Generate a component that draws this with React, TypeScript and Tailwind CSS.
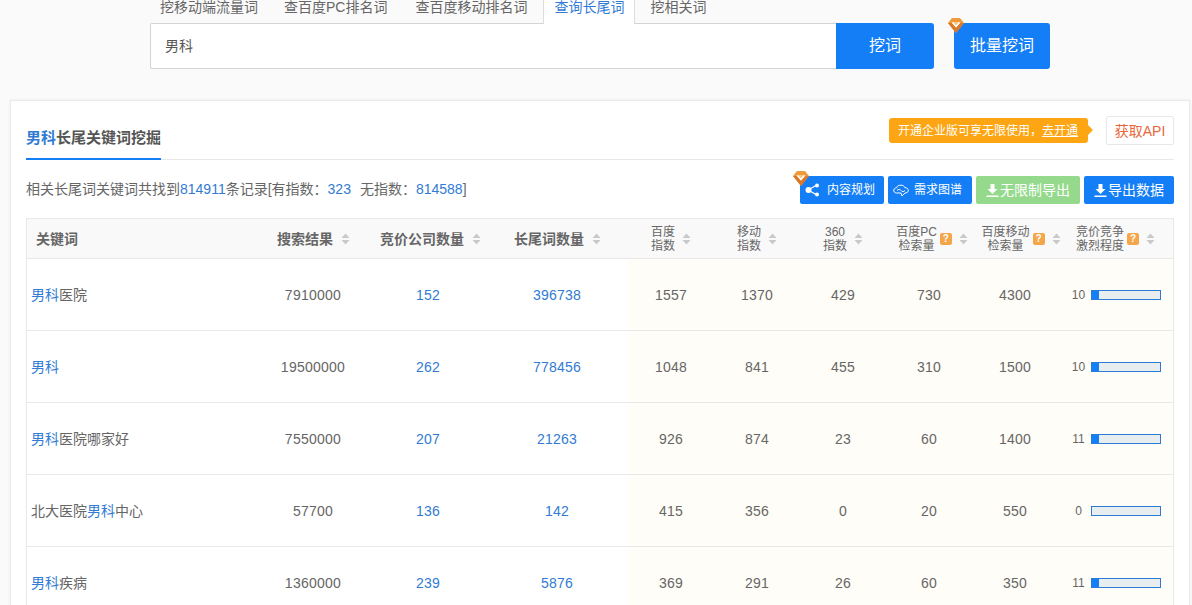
const font = "font-['Liberation_Sans','Noto_Sans_CJK_SC',sans-serif]";
const gridCols = "grid grid-cols-[229px_114px_116px_142px_86px_86px_86px_86px_86px_115px]";

const rows = [
  { pre: "", hit: "男科", post: "医院", results: "7910000", comp: "152", long: "396738", bd: "1557", mob: "1370", s360: "429", pc: "730", mpv: "4300", level: "10", fill: true },
  { pre: "", hit: "男科", post: "", results: "19500000", comp: "262", long: "778456", bd: "1048", mob: "841", s360: "455", pc: "310", mpv: "1500", level: "10", fill: true },
  { pre: "", hit: "男科", post: "医院哪家好", results: "7550000", comp: "207", long: "21263", bd: "926", mob: "874", s360: "23", pc: "60", mpv: "1400", level: "11", fill: true },
  { pre: "北大医院", hit: "男科", post: "中心", results: "57700", comp: "136", long: "142", bd: "415", mob: "356", s360: "0", pc: "20", mpv: "550", level: "0", fill: false },
  { pre: "", hit: "男科", post: "疾病", results: "1360000", comp: "239", long: "5876", bd: "369", mob: "291", s360: "26", pc: "60", mpv: "350", level: "11", fill: true },
];

const Diamond = ({ className }: { className: string }) => (
  <svg className={className} width="16" height="16" viewBox="0 0 16 16">
    <path d="M4 1h8l4 5-8 10L0 6z" fill="#ef9a3c" />
    <path d="M8 16 0 6h4l4 5 4-5h4z" fill="#d9772a" />
    <path d="M3.5 5h9L8 10.5z" fill="#f9c77e" />
    <path d="M4.5 5.5 8 9.5l3.5-4" fill="none" stroke="#fff" strokeWidth="1.4" />
  </svg>
);

const SortArrows = () => (
  <svg width="9" height="12" viewBox="0 0 9 12" className="shrink-0">
    <path d="M4.5 0.5 8.5 5h-8z" fill="#c9c9c9" />
    <path d="M4.5 11.5 8.5 7h-8z" fill="#c9c9c9" />
  </svg>
);

const Help = () => (
  <span className="flex h-[12px] w-[12px] shrink-0 items-center justify-center rounded-[2px] bg-[#f5a54a] text-[10px] font-bold leading-none text-white">?</span>
);

const Download = () => (
  <svg width="13" height="13" viewBox="0 0 13 13" className="shrink-0">
    <path d="M4.5 0h4v5h3l-5 5-5-5h3z" fill="#fff" />
    <path d="M0.5 11.5h12v1.5H0.5z" fill="#fff" />
  </svg>
);

const BoldHead = ({ label, className = "pl-[1px]" }: { label: string; className?: string }) => (
  <div className={`flex items-center justify-center gap-2 text-sm font-bold text-[#666] ${className}`}>
    {label}
    <SortArrows />
  </div>
);

const SmallHead = ({ lines, help, className = "" }: { lines: string[]; help?: boolean; className?: string }) => (
  <div className={`flex items-center justify-center whitespace-nowrap ${className}`}>
    <div className="text-center text-xs leading-[14px] text-[#666]">
      {lines.map((l) => (
        <div key={l}>{l}</div>
      ))}
    </div>
    {help && <span className="ml-[3px]"><Help /></span>}
    <span className="ml-[7px]">
      <SortArrows />
    </span>
  </div>
);

const App = () => {
  return (
    <div className={`${font} h-[605px] w-[1192px] overflow-hidden bg-[#fafafa] text-sm text-[#666]`}>
      {/* search */}
      <div className="flex h-[24px] pl-[149px] leading-[14px]">
        <div className="mr-[4px] px-[11px]">挖移动端流量词</div>
        <div className="mr-[6px] px-[11px]">查百度PC排名词</div>
        <div className="mr-[5px] px-[11px]">查百度移动排名词</div>
        <div className="relative z-10 mr-[5px] w-[92px] border-x border-[#ddd] bg-white px-[10px] text-[#317bd4]">查询长尾词</div>
        <div className="px-[10px]">挖相关词</div>
      </div>
      <div className="-mt-px flex pl-[150px]">
        <div className="flex h-[46px] w-[686px] items-center rounded-l-[2px] border border-r-0 border-[#d4d4d4] bg-white pl-[14px] text-[#555]">男科</div>
        <button className="h-[46px] w-[98px] rounded-r-[3px] bg-[#137ef5] text-base text-white">挖词</button>
        <button className="relative ml-[20px] h-[46px] w-[96px] rounded-[3px] bg-[#137ef5] text-base text-white">
          批量挖词
          <Diamond className="absolute -top-[6px] -left-[6px]" />
        </button>
      </div>

      {/* card */}
      <div className="ml-[10px] mt-[31px] h-[600px] w-[1180px] border border-[#eaeaea] bg-white px-[15px] shadow-[0_0_4px_rgba(0,0,0,0.05)]">
        <div className="flex h-[59px] items-start justify-between border-b border-[#e8e8e8]">
          <div className="-mb-px flex h-[59px] w-[135px] items-end whitespace-nowrap border-b-2 border-[#137ef5] pb-[10px] text-[15px] font-bold leading-[20px] text-[#555]">
            <span className="text-[#317bd4]">男科</span>长尾关键词挖掘
          </div>
          <div className="mt-[15px] flex items-start">
            <div className="relative mt-[2px] flex h-[25px] w-[199px] items-center rounded-[3px] bg-[#fda512] pl-[9px] text-xs text-white">
              <span>开通企业版可享无限使用，<span className="underline">去开通</span></span>
              <span className="absolute top-[7px] -right-[5px] h-0 w-0 border-y-[5px] border-l-[5px] border-y-transparent border-l-[#fda512]" />
            </div>
            <div className="ml-[18px] flex h-[29px] w-[68px] items-center justify-center rounded-[2px] border border-[#e8e8e8] text-[#e9663a]">获取API</div>
          </div>
        </div>

        <div className="flex h-[59px] items-start justify-between pt-[16px]">
          <div className="pt-[3px] leading-[20px]">
            相关长尾词关键词共找到<span className="text-[#317bd4]">814911</span>条记录[有指数：<span className="text-[#317bd4]">323</span>
            <span className="ml-[9px]">无指数：</span><span className="text-[#317bd4]">814588</span>]
          </div>
          <div className="flex gap-[4px]">
            <button className="relative flex h-[28px] w-[84px] items-center rounded-[2px] bg-[#137ef5] pl-[5px] text-xs text-white">
              <Diamond className="absolute -top-[6px] -left-[7px]" />
              <svg width="16" height="14" viewBox="0 0 16 14" className="shrink-0">
                <path d="M3 7 12 2M3 7l9 5" stroke="#fff" strokeWidth="1.4" />
                <circle cx="3.5" cy="7" r="3" fill="#fff" />
                <circle cx="12" cy="2.5" r="2" fill="#fff" />
                <circle cx="12" cy="11.5" r="2" fill="#fff" />
              </svg>
              <span className="ml-[6px]">内容规划</span>
            </button>
            <button className="flex h-[28px] w-[84px] items-center rounded-[2px] bg-[#137ef5] pl-[5px] text-xs text-white">
              <svg width="16" height="13" viewBox="0 0 16 13" className="shrink-0" fill="none" stroke="#fff" strokeWidth="1">
                <path d="M3.5 9C1.5 9 .5 7.5 .8 6 1 4.5 2.5 3.8 3.5 3.8 4 2 6 1 8 1.2c2 0 3.5 1 4 2.5 2 0 3.5 1.3 3.3 3S13.500 9 12 9L9 12 8 9z" />
                <path d="M4 6.500c1.500-1.500 3-1.500 4 0s2.500 1.500 4 0" />
              </svg>
              <span className="ml-[5px]">需求图谱</span>
            </button>
            <button className="flex h-[28px] w-[104px] items-center rounded-[2px] bg-[#95d98d] pl-[10px] text-white">
              <Download />
              <span className="ml-px">无限制导出</span>
            </button>
            <button className="flex h-[28px] w-[90px] items-center rounded-[2px] bg-[#137ef5] pl-[10px] text-white">
              <Download />
              <span className="ml-px">导出数据</span>
            </button>
          </div>
        </div>

        {/* table */}
        <div className="-mt-px border-x border-t border-[#e8e8e8]">
          <div className={`${gridCols} h-[40px] items-center border-b border-[#e8e8e8] bg-[#f9f9f9]`}>
            <div className="pl-[9px] text-sm font-bold text-[#666]">关键词</div>
            <BoldHead label="搜索结果" />
            <BoldHead label="竞价公司数量" className="pl-[5px]" />
            <BoldHead label="长尾词数量" />
            <SmallHead lines={["百度", "指数"]} />
            <SmallHead lines={["移动", "指数"]} />
            <SmallHead lines={["360", "指数"]} />
            <SmallHead lines={["百度PC", "检索量"]} help className="pl-[6px]" />
            <SmallHead lines={["百度移动", "检索量"]} help className="pl-[12px]" />
            <SmallHead lines={["竞价竞争", "激烈程度"]} help />
          </div>
          {rows.map((r) => (
            <div key={r.long} className={`${gridCols} h-[72px] items-center border-b border-[#e8e8e8] text-center tracking-[0.25px]`}>
              <div className="pl-[4px] text-left tracking-normal">
                {r.pre}<span className="text-[#317bd4]">{r.hit}</span>{r.post}
              </div>
              <div>{r.results}</div>
              <div className="text-[#317bd4]">{r.comp}</div>
              <div className="text-[#317bd4]">{r.long}</div>
              <div className="col-span-6 grid h-full grid-cols-[86px_86px_86px_86px_86px_115px] items-center bg-[#fffdf7]">
                <div>{r.bd}</div>
                <div>{r.mob}</div>
                <div>{r.s360}</div>
                <div>{r.pc}</div>
                <div>{r.mpv}</div>
                <div className="flex items-center">
                  <span className="w-[33px] pl-[8px] text-center text-xs tracking-normal">{r.level}</span>
                  <div className="h-[10px] w-[70px] border border-[#2b7cd6] bg-[#e8eef0]">
                    {r.fill && <div className="h-full w-[7px] bg-[#137ef5]" />}
                  </div>
                </div>
              </div>
            </div>
          ))}
        </div>
      </div>
    </div>
  );
};

export default App;
